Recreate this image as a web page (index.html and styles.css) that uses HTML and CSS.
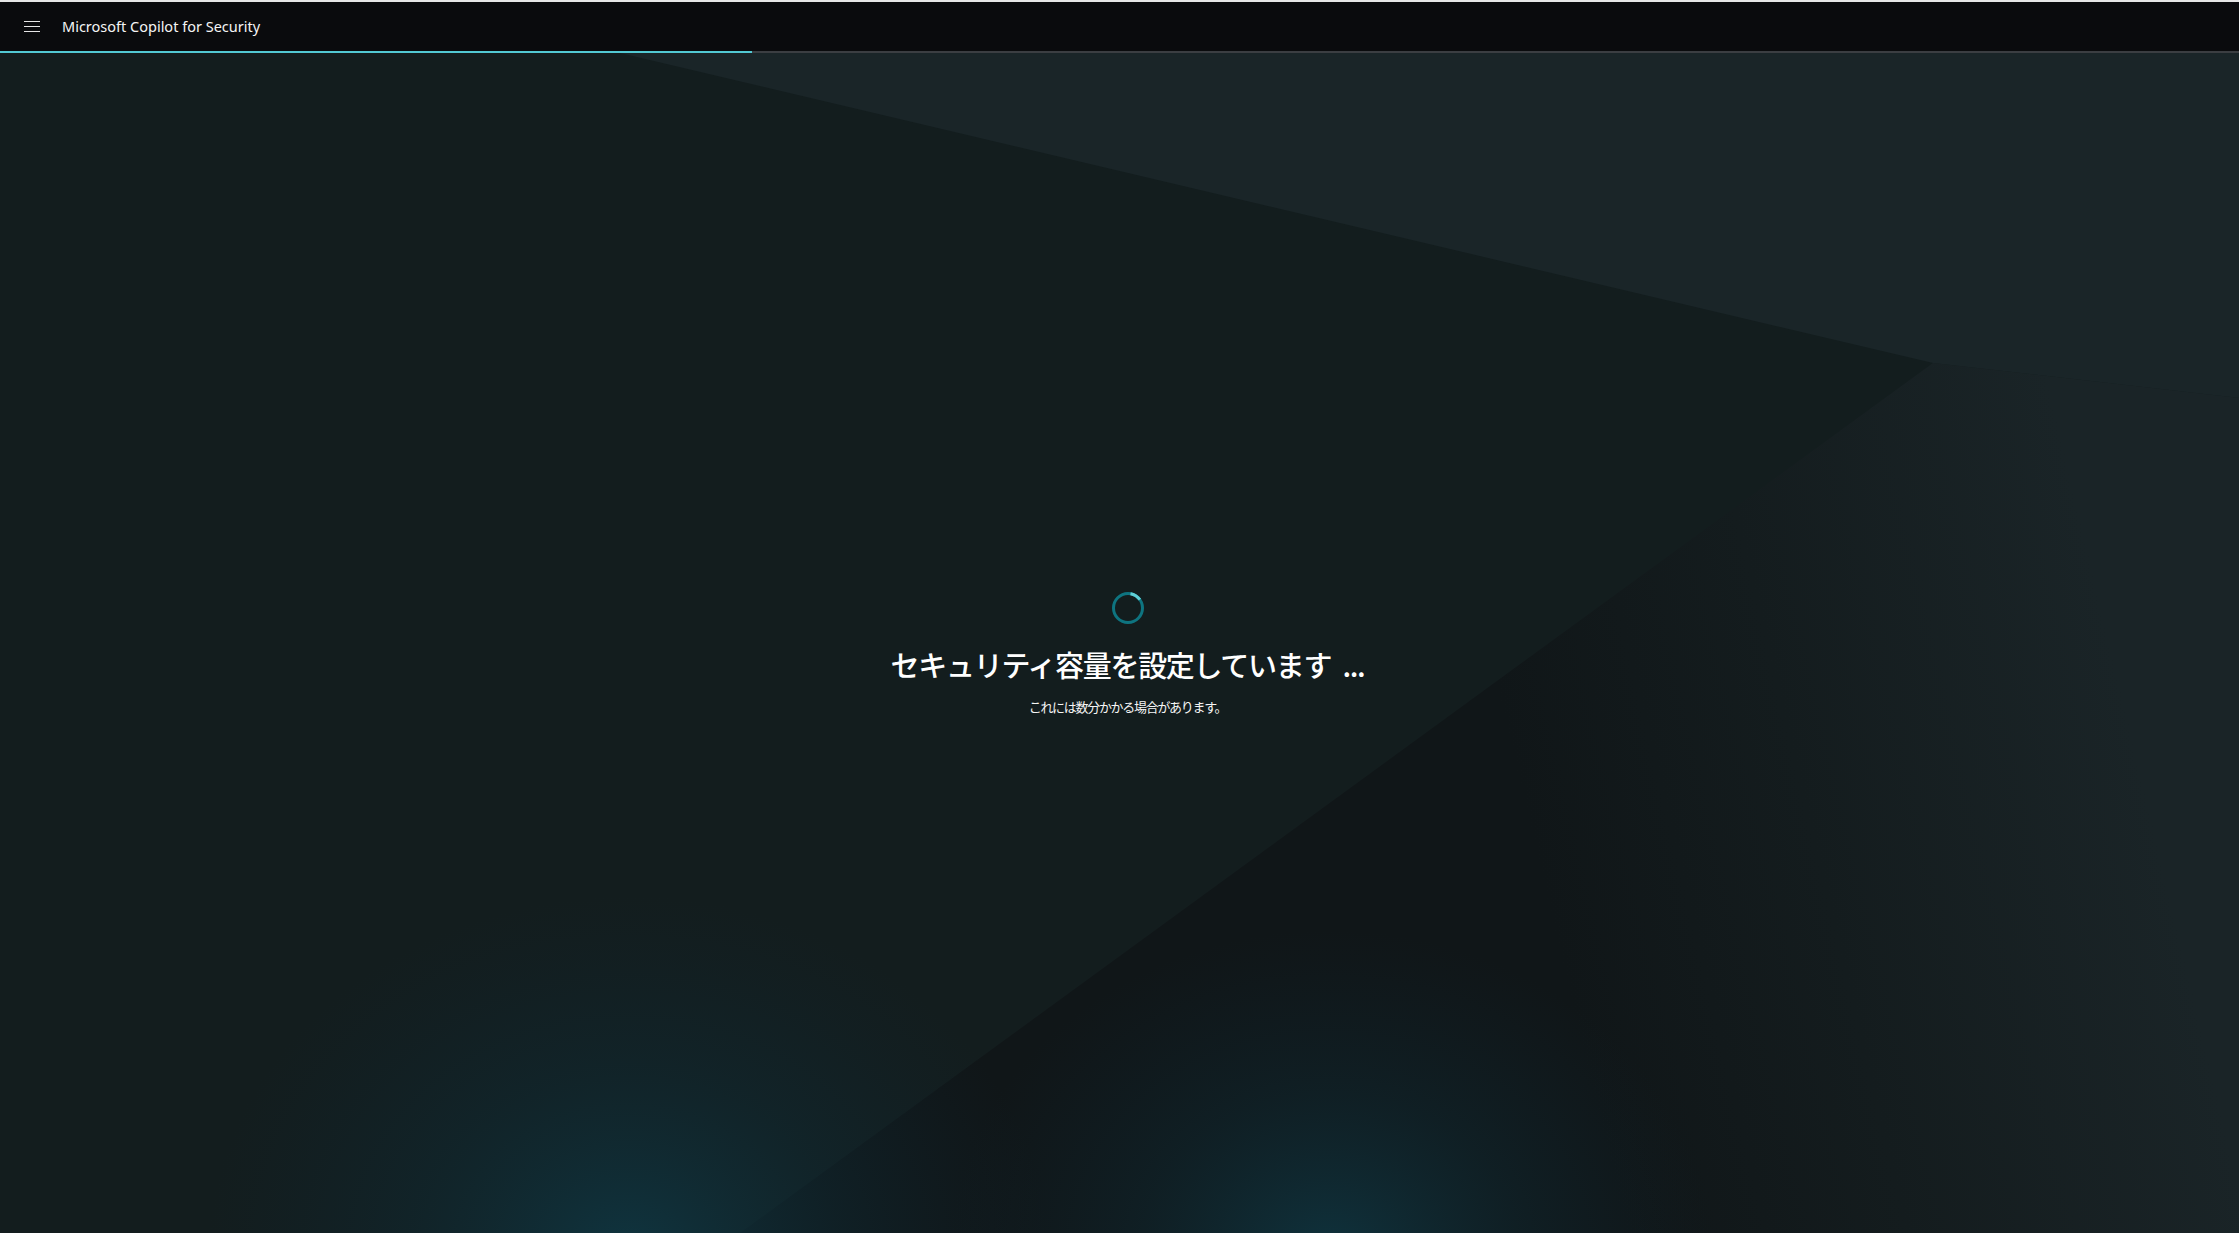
FILE: index.html
```html
<!DOCTYPE html>
<html lang="ja">
<head>
<meta charset="utf-8">
<title>Microsoft Copilot for Security</title>
<link rel="stylesheet" href="styles.css">
</head>
<body>
<div class="page">
  <div class="top-strip"></div>
  <header class="app-header">
    <button class="menu-btn" aria-label="メニュー">
      <svg width="16" height="12" viewBox="0 0 16 12" class="menu-icon">
        <rect x="0" y="0" width="16" height="1" fill="#e6e6e6"/>
        <rect x="0" y="5" width="16" height="1" fill="#e6e6e6"/>
        <rect x="0" y="10" width="16" height="1" fill="#e6e6e6"/>
      </svg>
    </button>
    <span class="app-title">Microsoft Copilot for Security</span>
  </header>
  <div class="progress"><div class="progress-fill" style="width:752px"></div></div>
  <main class="stage">
    <svg class="backdrop" viewBox="0 0 2239 1180" preserveAspectRatio="none" aria-hidden="true">
      <defs>
        <linearGradient id="gc" x1="1560" y1="900" x2="2150" y2="760" gradientUnits="userSpaceOnUse">
          <stop offset="0" stop-color="#101618"/>
          <stop offset="0.45" stop-color="#141c1e"/>
          <stop offset="1" stop-color="#1a2427"/>
        </linearGradient>
        <radialGradient id="g1" cx="628" cy="1200" r="420" gradientUnits="userSpaceOnUse" gradientTransform="translate(628 1200) scale(1 0.85) translate(-628 -1200)">
          <stop offset="0" stop-color="#0f3743" stop-opacity="0.9"/>
          <stop offset="0.5" stop-color="#0f2c36" stop-opacity="0.45"/>
          <stop offset="1" stop-color="#0f2530" stop-opacity="0"/>
        </radialGradient>
        <radialGradient id="g2" cx="1330" cy="1200" r="380" gradientUnits="userSpaceOnUse" gradientTransform="translate(1330 1200) scale(1 0.85) translate(-1330 -1200)">
          <stop offset="0" stop-color="#0f3743" stop-opacity="0.85"/>
          <stop offset="0.5" stop-color="#0f2c36" stop-opacity="0.4"/>
          <stop offset="1" stop-color="#0f2530" stop-opacity="0"/>
        </radialGradient>
      </defs>
      <rect x="0" y="0" width="2239" height="1180" fill="#131d1e"/>
      <polygon points="620,0 2239,0 2239,345 1933,310" fill="#1a2528"/>
      <polygon points="1933,310 2239,345 2239,1180 740,1180" fill="url(#gc)"/>
      <ellipse cx="628" cy="1200" rx="420" ry="360" fill="url(#g1)"/>
      <ellipse cx="1330" cy="1200" rx="380" ry="330" fill="url(#g2)"/>
    </svg>
    <section class="status">
      <svg class="spinner" width="32" height="32" viewBox="0 0 32 32" aria-hidden="true">
        <circle cx="16" cy="16" r="14.5" fill="none" stroke="#0e7480" stroke-width="3"/>
        <path d="M18.5 1.7 A14.5 14.5 0 0 1 27.9 7.7" fill="none" stroke="#5fcfd6" stroke-width="3"/>
      </svg>
      <h1 class="status-title">セキュリティ容量を設定しています ...</h1>
      <p class="status-sub">これには数分かかる場合があります。</p>
    </section>
  </main>
</div>
</body>
</html>
```

FILE: styles.css
```css
html, body {
  margin: 0;
  padding: 0;
  height: 100%;
  background: #131d1e;
  overflow: hidden;
}

.page {
  display: flex;
  flex-direction: column;
  height: 100vh;
  font-family: "Noto Sans", "Noto Sans CJK JP", sans-serif;
}

.top-strip {
  height: 2px;
  background: #e6e6e6;
  flex: none;
}

.app-header {
  flex: none;
  height: 49px;
  background: #0a0b0d;
  display: flex;
  align-items: center;
  padding-left: 24px;
  padding-bottom: 2px;
  box-sizing: border-box;
}

.menu-btn {
  background: none;
  border: 0;
  padding: 0;
  margin: 2px 0 0;
  width: 16px;
  height: 12px;
  display: flex;
  cursor: pointer;
}

.menu-icon {
  display: block;
}

.app-title {
  margin-left: 22px;
  color: #f5f5f5;
  font-size: 14.5px;
  line-height: 20px;
  font-family: "Noto Sans", "Noto Sans CJK JP", sans-serif;
}

.progress {
  flex: none;
  height: 2px;
  background: #3b3e42;
  display: flex;
}

.progress-fill {
  height: 2px;
  background: #52c9d3;
}

.stage {
  flex: 1;
  position: relative;
  overflow: hidden;
  display: flex;
  flex-direction: column;
  align-items: center;
  padding-top: 539px;
  padding-left: 16px;
  box-sizing: border-box;
}

.backdrop {
  position: absolute;
  inset: 0;
  width: 100%;
  height: 100%;
  display: block;
}

.status {
  position: relative;
  display: flex;
  flex-direction: column;
  align-items: center;
}

.spinner {
  display: block;
  width: 32px;
  height: 32px;
}

.status-title {
  margin: 20px 0 0;
  color: #ffffff;
  font-family: "Noto Sans CJK JP", sans-serif;
  font-weight: 500;
  font-size: 29px;
  letter-spacing: -1.3px;
  word-spacing: 6px;
  line-height: 40px;
  white-space: nowrap;
}

.status-sub {
  margin: 13px 0 0;
  color: #f5f5f5;
  font-family: "Noto Sans CJK JP", sans-serif;
  font-size: 13px;
  letter-spacing: -1.3px;
  line-height: 20px;
  white-space: nowrap;
}
```
